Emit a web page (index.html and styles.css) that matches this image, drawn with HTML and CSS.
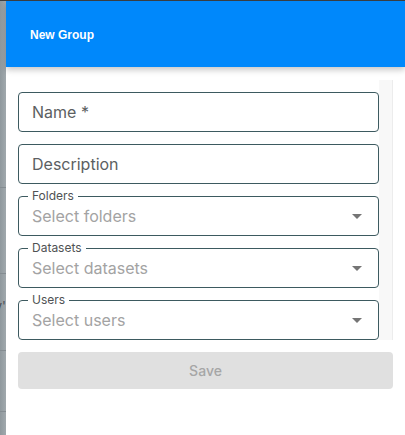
FILE: index.html
```html
<!DOCTYPE html>
<html lang="en">
<head>
    <meta charset="UTF-8">
    <meta name="viewport" content="width=device-width, initial-scale=1.0">
    <title>New Group</title>
    <link rel="stylesheet" href="styles.css">
</head>
<body>
    <div class="topline"></div>
    <div class="screen">
        <div class="backdrop">
            <div class="row" style="height: 186px"></div>
            <div class="row" style="height: 85px"></div>
            <div class="row" style="height: 76px"><span class="peek">v'</span></div>
            <div class="row" style="height: 60px"></div>
        </div>
        <div class="drawer">
            <header class="drawer-header">
                <h2>New Group</h2>
            </header>
            <div class="drawer-body">
                <div class="scroll">
                    <form class="fields">
                        <div class="field">
                            <span class="label">Name *</span>
                        </div>
                        <div class="field">
                            <span class="label">Description</span>
                        </div>
                        <fieldset class="select">
                            <legend>Folders</legend>
                            <span class="placeholder">Select folders</span>
                            <span class="caret"></span>
                        </fieldset>
                        <fieldset class="select">
                            <legend>Datasets</legend>
                            <span class="placeholder">Select datasets</span>
                            <span class="caret"></span>
                        </fieldset>
                        <fieldset class="select">
                            <legend>Users</legend>
                            <span class="placeholder">Select users</span>
                            <span class="caret"></span>
                        </fieldset>
                    </form>
                    <div class="scrollbar"></div>
                </div>
                <button class="save" disabled>Save</button>
            </div>
        </div>
    </div>
</body>
</html>
```

FILE: styles.css
```css
html, body {
    margin: 0;
    height: 100%;
}
body {
    font-family: Inter, "Noto Sans", sans-serif;
    background: #fff;
    display: flex;
    flex-direction: column;
    overflow: hidden;
}
.topline {
    height: 1px;
    background: #3b3f42;
}
.screen {
    flex: 1;
    display: flex;
}
.backdrop {
    width: 6px;
    background: linear-gradient(90deg, #8f989d, #a1a9ad);
    display: flex;
    flex-direction: column;
}
.backdrop .row {
    border-bottom: 1px solid #848c91;
    position: relative;
}
.peek {
    position: absolute;
    right: 0;
    top: 25px;
    font-size: 13px;
    color: #4a5054;
    line-height: 14px;
}
.drawer {
    flex: 1;
    display: flex;
    flex-direction: column;
    background: #fff;
}
.drawer-header {
    height: 66px;
    background: #0088fb;
    display: flex;
    align-items: center;
    padding-left: 24px;
    box-shadow: 0 3px 6px rgba(0, 0, 0, 0.22);
    position: relative;
    z-index: 1;
}
.drawer-header h2 {
    margin: 0;
    font-family: "Liberation Sans", Arial, sans-serif;
    font-size: 12px;
    font-weight: bold;
    color: #fff;
    padding-top: 2px;
}
.drawer-body {
    padding: 13px 12px 0 12px;
    display: flex;
    flex-direction: column;
}
.scroll {
    display: flex;
    height: 260px;
}
.fields {
    flex: 1;
    display: flex;
    flex-direction: column;
    gap: 12px;
    padding-top: 12px;
}
.field {
    height: 40px;
    box-sizing: border-box;
    border: 1px solid #3d5a60;
    border-radius: 4px;
    display: flex;
    align-items: center;
    padding: 0 13px;
}
.label {
    font-size: 16px;
    color: #5c5f62;
}
.select {
    margin: -7px 0 0 0;
    min-width: 0;
    border: 1px solid #3d5a60;
    border-radius: 4px;
    padding: 2px 16px 8px 13px;
    display: flex;
    align-items: center;
}
.select legend {
    font-size: 12px;
    line-height: 14px;
    color: #4f5254;
    padding: 0 4px;
    margin-left: -4px;
}
.placeholder {
    flex: 1;
    font-size: 16px;
    line-height: 22px;
    color: #a3a3a3;
}
.caret {
    width: 0;
    height: 0;
    border-left: 5px solid transparent;
    border-right: 5px solid transparent;
    border-top: 5px solid #757575;
    margin-top: 1px;
}
.scrollbar {
    width: 13px;
    background: #f8f8f8;
    border-right: 1px solid #ececec;
}
.save {
    margin-top: 12px;
    height: 37px;
    border: none;
    border-radius: 4px;
    background: #e0e0e0;
    color: #a6a6a6;
    font-family: Inter, "Noto Sans", sans-serif;
    font-size: 14px;
    font-weight: 500;
}
```
